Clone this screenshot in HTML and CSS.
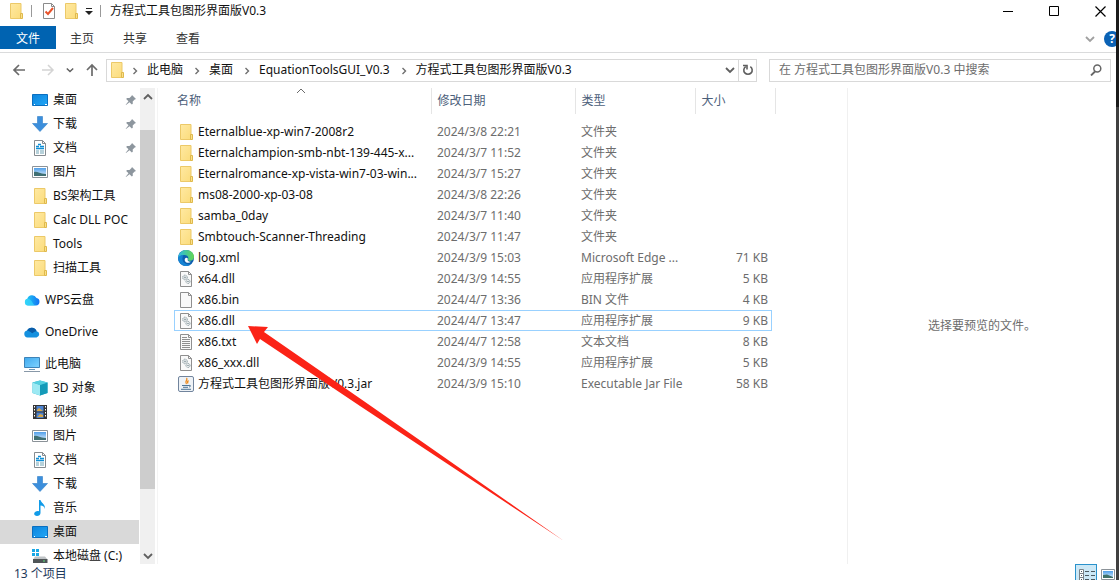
FILE: index.html
```html
<!DOCTYPE html>
<html lang="zh-CN">
<head>
<meta charset="utf-8">
<title>方程式工具包图形界面版V0.3</title>
<link rel="stylesheet" href="styles.css">
</head>
<body>
<svg class="sprite" aria-hidden="true">
  <defs>
    <linearGradient id="g-folder" x1="0" x2="1" y1="0" y2="1"><stop offset="0" stop-color="#ffe9a2"/><stop offset="1" stop-color="#fbdc7c"/></linearGradient>
    <linearGradient id="g-screen" x1="0" x2="1" y1="0" y2="1"><stop offset="0" stop-color="#0d84dc"/><stop offset="1" stop-color="#22a7f7"/></linearGradient>
    <linearGradient id="g-pc" x1="0" x2="1" y1="0" y2="1"><stop offset="0" stop-color="#3fa9ee"/><stop offset="1" stop-color="#7fd3ff"/></linearGradient>
    <linearGradient id="g-sky" x1="0" x2="0" y1="0" y2="1"><stop offset="0" stop-color="#4f9ee8"/><stop offset="1" stop-color="#dcefff"/></linearGradient>
    <linearGradient id="g-wps" x1="0" x2="1" y1="0" y2="0"><stop offset="0" stop-color="#23d3f5"/><stop offset="1" stop-color="#1271f2"/></linearGradient>
    <linearGradient id="g-edge" x1="0" x2="1" y1="0" y2="0"><stop offset="0" stop-color="#2bb8e6"/><stop offset="1" stop-color="#63d850"/></linearGradient>
  </defs>
  <symbol id="folder" viewBox="0 0 16 16"><path d="M2.500.5h10.500v15H2.500z" fill="url(#g-folder)" stroke="#ecc968"/><path d="M12.500 15.500v-5h2v5z" fill="#fbe08a" stroke="#dfb94c"/></symbol>
  <symbol id="desktop" viewBox="0 0 16 16"><path d="M.5 2.500h15v11H.5z" fill="url(#g-screen)" stroke="#0b6fc0"/><path d="M2 12.500h1m10 0h2" stroke="#fff"/></symbol>
  <symbol id="download" viewBox="0 0 16 16"><path d="M5.500.5h5v7h5L8 15.500.5 7.500h5z" fill="#3c8fdc" stroke="#2f7dc6" stroke-width=".6"/></symbol>
  <symbol id="doc" viewBox="0 0 16 16"><path d="M2.500.5h8l3 3v12h-11z" fill="#fff" stroke="#858b90"/><path d="M10.500.5v3h3" fill="none" stroke="#858b90"/><path d="M4 6.500h3M9 4.500H6M8 6.500h4M4 8.500h8" stroke="#0f8fd6" stroke-width="1.300"/><path d="M4 11h3m1 0h4M4 13h3m1 0h4" stroke="#6fa3b5"/></symbol>
  <symbol id="picture" viewBox="0 0 16 16"><path d="M.5 2.500h15v11H.5z" fill="#fff" stroke="#8b9298"/><path d="M2 4h12v8H2z" fill="url(#g-sky)"/><path d="M2 8c3-1 5 1 8 1.500l4 .5v2H2z" fill="#3f6f73"/></symbol>
  <symbol id="cloud-wps" viewBox="0 0 16 16"><path d="M4 13.500a3.500 3.500 0 0 1-.7-6.800A5 5 0 0 1 12.500 6a3.800 3.800 0 0 1-.5 7.500z" fill="url(#g-wps)"/><path d="M3.300 6.700c3 0 4 2 5 3.500s2 3.300 4 3.300H4a3.500 3.500 0 0 1-.7-6.800z" fill="#38d6fb" opacity=".7"/></symbol>
  <symbol id="cloud-one" viewBox="0 0 16 16"><path d="M3.500 13.500A3.500 3.500 0 0 1 3 6.600a5.200 5.200 0 0 1 9.600.6 3.200 3.200 0 0 1 0 6.300z" fill="#1490df"/><path d="M3 6.600a5.200 5.200 0 0 1 9.600.6c-2 0-3.200 1.400-4.500 2C6.500 8 5 6.800 3 6.600z" fill="#0a5ca8"/></symbol>
  <symbol id="pc" viewBox="0 0 16 16"><path d="M.5 1.500h15v10H.5z" fill="url(#g-pc)" stroke="#3d83b8"/><path d="M5 13.500h6" stroke="#6c99b8"/><path d="M0 15.500h16" stroke="#8898a8"/></symbol>
  <symbol id="cube" viewBox="0 0 16 16"><path d="M8 .5l7.500 2v10.500L8 15.500.5 13V2.500z" fill="#2bb5cf"/><path d="M.5 2.500 8 5v10.500L.5 13z" fill="#9ce9f3"/><path d="M8 5l7.500-2.500V13L8 15.500z" fill="#149ab8"/><path d="M.5 2.500 8 .5l7.500 2L8 5z" fill="#56cfdf"/></symbol>
  <symbol id="video" viewBox="0 0 16 16"><path d="M1 1h14v14H1z" fill="#353535"/><path d="M4.500 2h7v5.500h-7zM4.500 8.500h7V14h-7z" fill="#4c83d1"/><path d="M5 6l2-2 4 3H5zm0 7 3-3 3 1v2z" fill="#d5a64a"/><path d="M2.500 2v12m11-12v12" stroke="#fff" stroke-dasharray="1.500 1.500"/></symbol>
  <symbol id="music" viewBox="0 0 16 16"><path d="M7 0h1.500c.5 3 5 4 4.500 9-.5-2-2-3.500-4.500-3.500V13c0 1.700-1.700 3-3.500 3S2 15 2.200 13.500C2.500 11.700 5 10.500 7 11.300z" fill="#119be8"/></symbol>
  <symbol id="drive" viewBox="0 0 16 16"><path d="M0 1h3v3H0zm4 0h3v3H4zM0 5h3v3H0zm4 0h3v3H4z" fill="#19a8e6"/><path d="M3 8.500h10l2.500 3H1z" fill="#bfc3c6"/><path d="M1 11h14.500v4H1z" fill="#4f5557"/><path d="M11 13h2" stroke="#5de07c"/></symbol>
  <symbol id="pin" viewBox="0 0 12 12"><path d="M7 1l4 4-1.300.4-2 2 .1 2.300-1 .8L4.500 8.200 1 11l-.3-.2L3.500 7.300 1.200 5l.8-1 2.500.1 2-2z" fill="#8d969e"/></symbol>
  <symbol id="edge" viewBox="0 0 16 16"><circle cx="8" cy="8" r="8" fill="#0d5faf"/><path d="M0 8C.5 3 4 0 8 0c5 0 8 3.500 8 7 0 2.500-2 3.800-4 3.800-1.500 0-2.500-.6-2-1.400C11.500 6 8 4.500 5.500 5 2.500 5.500 1 7 0 8z" fill="url(#g-edge)"/><path d="M0 8c1-2 3-3 5.500-3C4 7 4 10.500 6 12.500S12 15 13.500 13.800A8 8 0 0 1 0 8z" fill="#1683d3"/><path d="M9.900 8.800c-1 2 1 3.200 3.100 3-2 2-6 1-6.300-1.500C6.500 8 8.500 6.600 9.900 8.800z" fill="#fff"/></symbol>
  <symbol id="sheet" viewBox="0 0 16 16"><path d="M2.500.5h8l3 3v12h-11z" fill="#f9f9f9" stroke="#8f8f8f"/><path d="M10.500.5v3h3" fill="none" stroke="#8f8f8f"/></symbol>
  <symbol id="dll" viewBox="0 0 16 16"><use href="#sheet"/><g fill="none" stroke="#87999f"><circle cx="7" cy="6.500" r="2.300" stroke-dasharray="1.200 .5"/><circle cx="7" cy="6.500" r=".7"/><circle cx="10" cy="10.500" r="2" stroke-dasharray="1.200 .5"/><circle cx="10" cy="10.500" r=".5"/></g></symbol>
  <symbol id="txt" viewBox="0 0 16 16"><use href="#sheet"/><path d="M4 3.500h5m-5 2h8m-8 2h8m-8 2h8m-8 2h8m-8 2h8" stroke="#8f8f8f"/></symbol>
  <symbol id="jar" viewBox="0 0 16 16"><rect x=".5" y=".5" width="15" height="15" rx="1.500" fill="#eef2f6" stroke="#71849d"/><path d="M8.500 2c2 2-2.500 3 0 6M10.500 4.500c-1 .8-1.500 1.500-.5 3" fill="none" stroke="#ee8a1c" stroke-width="1.300"/><path d="M4 9.500h7M5 11.300h5M3 13.300h10M11 9.500c2-.8 2 1.300 0 1.500" fill="none" stroke="#4e7595"/></symbol>
  <symbol id="chev-down" viewBox="0 0 10 10"><path d="M1 3l4 4 4-4" fill="none" stroke="currentColor" stroke-width="1.800"/></symbol>
  <symbol id="chev-right" viewBox="0 0 10 10"><path d="M3.500 2l3 3-3 3" fill="none" stroke="#6f6f6f" stroke-width="1.400"/></symbol>
</svg>

<div class="screen">
<main class="window">
  <header class="titlebar">
    <svg class="icon"><use href="#folder"/></svg>
    <span class="rule"></span>
    <button class="quick" aria-label="属性"><svg class="icon" viewBox="0 0 16 16"><path d="M2.500.5h8l3 3v12h-11z" fill="#fff" stroke="#8b8b8b"/><path d="M10.500.5v3h3" fill="none" stroke="#8b8b8b"/><path d="M4.500 8.500 7 11l5-6" fill="none" stroke="#e8532b" stroke-width="2"/></svg></button>
    <button class="quick" aria-label="新建文件夹"><svg class="icon"><use href="#folder"/></svg></button>
    <button class="quick more" aria-label="自定义快速访问工具栏"><svg width="8" height="8" viewBox="0 0 8 8"><path d="M1 1.500h6" stroke="#222"/><path d="M0 4h8L4 8z" fill="#222"/></svg></button>
    <span class="rule"></span>
    <h1 class="title">方程式工具包图形界面版V0.3</h1>
    <div class="controls">
      <button class="control" aria-label="最小化"><svg width="11" height="11" viewBox="0 0 11 11"><path d="M0 5.500h10" stroke="#000"/></svg></button>
      <button class="control" aria-label="最大化"><svg width="11" height="11" viewBox="0 0 11 11"><path d="M.5.5h9v9h-9z" fill="none" stroke="#000"/></svg></button>
      <button class="control" aria-label="关闭"><svg width="11" height="11" viewBox="0 0 11 11"><path d="M.5.5l10 10m0-10l-10 10" stroke="#000" stroke-width="1.200"/></svg></button>
    </div>
  </header>

  <nav class="ribbon" aria-label="功能区">
    <button class="tab file">文件</button>
    <button class="tab">主页</button>
    <button class="tab">共享</button>
    <button class="tab">查看</button>
    <div class="ribbon-end">
      <button class="quick expand" aria-label="展开功能区"><svg width="10" height="10"><use href="#chev-down"/></svg></button>
      <button class="help" aria-label="帮助">?</button>
    </div>
  </nav>

  <div class="location">
    <div class="history">
      <button class="quick" aria-label="后退"><svg width="14" height="14" viewBox="0 0 14 14"><path d="M13 7H2m5-5L2 7l5 5" fill="none" stroke="#6b6b6b" stroke-width="1.700"/></svg></button>
      <button class="quick" aria-label="前进"><svg width="14" height="14" viewBox="0 0 14 14"><path d="M1 7h11M7 2l5 5-5 5" fill="none" stroke="#d4d4d4" stroke-width="1.500"/></svg></button>
      <button class="quick recent" aria-label="最近位置"><svg width="8" height="8"><use href="#chev-down"/></svg></button>
      <button class="quick" aria-label="上移"><svg width="14" height="14" viewBox="0 0 14 14"><path d="M7 13V2M2 7l5-5 5 5" fill="none" stroke="#6b6b6b" stroke-width="1.700"/></svg></button>
    </div>
    <div class="address">
      <svg class="icon"><use href="#folder"/></svg>
      <svg class="sep"><use href="#chev-right"/></svg><a class="crumb" href="#">此电脑</a>
      <svg class="sep"><use href="#chev-right"/></svg><a class="crumb" href="#">桌面</a>
      <svg class="sep"><use href="#chev-right"/></svg><a class="crumb" href="#">EquationToolsGUI_V0.3</a>
      <svg class="sep"><use href="#chev-right"/></svg><a class="crumb" href="#">方程式工具包图形界面版V0.3</a>
      <button class="quick drop" aria-label="以前的位置"><svg width="10" height="10"><use href="#chev-down"/></svg></button>
      <button class="quick refresh" aria-label="刷新"><svg width="12" height="12" viewBox="0 0 12 12"><path d="M8.300 2.600a4.200 4.200 0 1 1-4.600 0M1 1.500h4v4" fill="none" stroke="#5f5f5f" stroke-width="1.600"/></svg></button>
    </div>
    <label class="search">
      <input type="search" placeholder="在 方程式工具包图形界面版V0.3 中搜索" aria-label="搜索">
      <svg width="12" height="12" viewBox="0 0 12 12"><circle cx="7.300" cy="4.500" r="3.500" fill="none" stroke="#666" stroke-width="1.500"/><path d="M5 7.500 1 11.500" stroke="#666" stroke-width="1.800"/></svg>
    </label>
  </div>

  <div class="content">
    <aside class="sidebar">
      <ul class="tree">
        <li><a class="node" href="#"><svg class="icon"><use href="#desktop"/></svg>桌面<svg class="pin"><use href="#pin"/></svg></a></li>
        <li><a class="node" href="#"><svg class="icon"><use href="#download"/></svg>下载<svg class="pin"><use href="#pin"/></svg></a></li>
        <li><a class="node" href="#"><svg class="icon"><use href="#doc"/></svg>文档<svg class="pin"><use href="#pin"/></svg></a></li>
        <li><a class="node" href="#"><svg class="icon"><use href="#picture"/></svg>图片<svg class="pin"><use href="#pin"/></svg></a></li>
        <li><a class="node" href="#"><svg class="icon"><use href="#folder"/></svg>BS架构工具</a></li>
        <li><a class="node" href="#"><svg class="icon"><use href="#folder"/></svg>Calc DLL POC</a></li>
        <li><a class="node" href="#"><svg class="icon"><use href="#folder"/></svg>Tools</a></li>
        <li><a class="node" href="#"><svg class="icon"><use href="#folder"/></svg>扫描工具</a></li>
        <li class="group"><a class="node root" href="#"><svg class="icon"><use href="#cloud-wps"/></svg>WPS云盘</a></li>
        <li class="group"><a class="node root" href="#"><svg class="icon"><use href="#cloud-one"/></svg>OneDrive</a></li>
        <li class="group"><a class="node root" href="#"><svg class="icon"><use href="#pc"/></svg>此电脑</a></li>
        <li><a class="node" href="#"><svg class="icon"><use href="#cube"/></svg>3D 对象</a></li>
        <li><a class="node" href="#"><svg class="icon"><use href="#video"/></svg>视频</a></li>
        <li><a class="node" href="#"><svg class="icon"><use href="#picture"/></svg>图片</a></li>
        <li><a class="node" href="#"><svg class="icon"><use href="#doc"/></svg>文档</a></li>
        <li><a class="node" href="#"><svg class="icon"><use href="#download"/></svg>下载</a></li>
        <li><a class="node" href="#"><svg class="icon"><use href="#music"/></svg>音乐</a></li>
        <li><a class="node selected" href="#"><svg class="icon"><use href="#desktop"/></svg>桌面</a></li>
        <li><a class="node" href="#"><svg class="icon"><use href="#drive"/></svg>本地磁盘 (C:)</a></li>
      </ul>
      <div class="scrollbar">
        <button class="quick step" aria-label="向上滚动"><svg class="flip" width="10" height="10"><use href="#chev-down"/></svg></button>
        <div class="track"><div class="thumb"></div></div>
        <button class="quick step" aria-label="向下滚动"><svg width="10" height="10"><use href="#chev-down"/></svg></button>
      </div>
    </aside>

    <section class="files">
      <table class="list">
        <colgroup><col class="c-name"><col class="c-date"><col class="c-type"><col class="c-size"></colgroup>
        <thead>
          <tr><th class="sorted">名称<svg class="sort" viewBox="0 0 10 6"><path d="M1 5l4-4 4 4" fill="none" stroke="#6b6b6b"/></svg></th><th>修改日期</th><th>类型</th><th>大小</th></tr>
        </thead>
        <tbody>
          <tr><td><span class="name"><svg class="icon"><use href="#folder"/></svg><span class="label">Eternalblue-xp-win7-2008r2</span></span></td><td>2024/3/8 22:21</td><td>文件夹</td><td></td></tr>
          <tr><td><span class="name"><svg class="icon"><use href="#folder"/></svg><span class="label">Eternalchampion-smb-nbt-139-445-x...</span></span></td><td>2024/3/7 11:52</td><td>文件夹</td><td></td></tr>
          <tr><td><span class="name"><svg class="icon"><use href="#folder"/></svg><span class="label">Eternalromance-xp-vista-win7-03-win...</span></span></td><td>2024/3/7 15:27</td><td>文件夹</td><td></td></tr>
          <tr><td><span class="name"><svg class="icon"><use href="#folder"/></svg><span class="label">ms08-2000-xp-03-08</span></span></td><td>2024/3/8 22:26</td><td>文件夹</td><td></td></tr>
          <tr><td><span class="name"><svg class="icon"><use href="#folder"/></svg><span class="label">samba_0day</span></span></td><td>2024/3/7 11:40</td><td>文件夹</td><td></td></tr>
          <tr><td><span class="name"><svg class="icon"><use href="#folder"/></svg><span class="label">Smbtouch-Scanner-Threading</span></span></td><td>2024/3/7 11:47</td><td>文件夹</td><td></td></tr>
          <tr><td><span class="name"><svg class="icon"><use href="#edge"/></svg><span class="label">log.xml</span></span></td><td>2024/3/9 15:03</td><td>Microsoft Edge ...</td><td>71 KB</td></tr>
          <tr><td><span class="name"><svg class="icon"><use href="#dll"/></svg><span class="label">x64.dll</span></span></td><td>2024/3/9 14:55</td><td>应用程序扩展</td><td>5 KB</td></tr>
          <tr><td><span class="name"><svg class="icon"><use href="#sheet"/></svg><span class="label">x86.bin</span></span></td><td>2024/4/7 13:36</td><td>BIN 文件</td><td>4 KB</td></tr>
          <tr class="focused"><td><span class="name"><svg class="icon"><use href="#dll"/></svg><span class="label">x86.dll</span></span></td><td>2024/4/7 13:47</td><td>应用程序扩展</td><td>9 KB</td></tr>
          <tr><td><span class="name"><svg class="icon"><use href="#txt"/></svg><span class="label">x86.txt</span></span></td><td>2024/4/7 12:58</td><td>文本文档</td><td>8 KB</td></tr>
          <tr><td><span class="name"><svg class="icon"><use href="#dll"/></svg><span class="label">x86_xxx.dll</span></span></td><td>2024/3/9 14:55</td><td>应用程序扩展</td><td>5 KB</td></tr>
          <tr><td><span class="name"><svg class="icon"><use href="#jar"/></svg><span class="label">方程式工具包图形界面版V0.3.jar</span></span></td><td>2024/3/9 15:10</td><td>Executable Jar File</td><td>58 KB</td></tr>
        </tbody>
      </table>
      <svg class="pointer" viewBox="0 0 320 216" aria-hidden="true"><path d="M0 0 20 1 16 6 120 78 316 215 112 80 12 13 9 18z" fill="#fb2317"/></svg>
    </section>

    <section class="preview"><p>选择要预览的文件。</p></section>
  </div>

  <footer class="status">
    <span>13 个项目</span>
    <div class="views">
      <button class="view active" aria-label="详细信息"><svg width="20" height="20" viewBox="0 0 20 20"><path d="M3.500 4.500h4v12h-4zM3.500 8.500h4m-4 4h4" fill="#fff" stroke="#7a8288"/><path d="M5 6.500h1m-1 4h1m-1 4h1M9 6.500h4m2 0h4m-10 4h4m2 0h4m-10 4h4m2 0h4" stroke="#4d5a61"/></svg></button>
      <button class="view" aria-label="大缩略图"><svg width="14" height="14" viewBox="0 0 14 14"><path d="M.5.5h13v10H.5z" fill="#fff" stroke="#8b9298"/><path d="M2 2h10v7H2z" fill="url(#g-sky)"/><path d="M2 6l4-.5L12 8v1H2z" fill="#3f7068"/></svg></button>
    </div>
  </footer>
</main>
<div class="edge"></div>
</div>
</body>
</html>
```
FILE: styles.css
```css
* { box-sizing: border-box; }

body {
  margin: 0;
  background: #fff;
  color: #111;
  font: 12px/20px "Noto Sans", "Noto Sans CJK SC", sans-serif;
}

button, input { font: inherit; color: inherit; }
a { color: inherit; text-decoration: none; }
svg { display: block; flex: none; }

.sprite { position: absolute; width: 0; height: 0; }
.icon { width: 16px; height: 16px; }

.screen { display: flex; height: 100vh; overflow: hidden; }
.window {
  flex: 1;
  min-width: 0;
  display: flex;
  flex-direction: column;
  overflow: hidden;
}
.edge {
  width: 3px;
  background: linear-gradient(#1b1b1b 107px, #404040 107px);
}

.quick {
  display: flex;
  align-items: center;
  justify-content: center;
  padding: 0;
  border: 0;
  background: none;
  color: #5f5f5f;
}

/* Title bar */
.titlebar {
  display: flex;
  align-items: center;
  gap: 6px;
  height: 22px;
  margin-bottom: 4px;
  padding-left: 8px;
}
.rule { width: 1px; height: 12px; margin: 0 3px 0 1px; background: #999; }
.more { width: 8px; }
.title { flex: 1; margin: 0; font-size: 12px; font-weight: 400; }
.controls { display: flex; margin-right: -7px; }
.control {
  display: flex;
  align-items: center;
  justify-content: center;
  width: 46px;
  height: 22px;
  padding: 0;
  border: 0;
  background: none;
}

/* Ribbon tabs */
.ribbon {
  display: flex;
  gap: 1px;
  height: 27px;
  padding-bottom: 3px;
  border-bottom: 1px solid #dadbdc;
  flex: none;
}
.tab { padding: 2px 14px 0; border: 0; background: none; color: #333; }
.file { margin-right: -1px; padding: 2px 16px 0; background: #0063b1; color: #fff; }
.ribbon-end { display: flex; align-items: center; margin: 3px -4px 0 auto; }
.expand { width: 28px; color: #a0a0a0; }
.help {
  width: 16px;
  height: 16px;
  padding: 0;
  border: 0;
  border-radius: 50%;
  background: #0b62b5;
  color: #fff;
  font-weight: 700;
  line-height: 16px;
}

/* Address row */
.location {
  display: flex;
  align-items: center;
  height: 34px;
  margin-bottom: 1px;
  padding: 0 5px 0 12px;
  flex: none;
}
.history { display: flex; align-items: center; gap: 15px; width: 94px; }
.recent { margin: 0 -4px; }
.address {
  display: flex;
  align-items: stretch;
  flex: 647;
  height: 23px;
  border: 1px solid #d9d9d9;
  padding-left: 2px;
  min-width: 0;
}
.address .icon { margin-top: 2px; }
.sep { width: 10px; height: 10px; margin: 6px 7px 0 9px; }
.address .icon + .sep { margin-left: 5px; }
.crumb { white-space: nowrap; }
.drop { width: 17px; margin-left: auto; }
.refresh { width: 18px; border-left: 1px solid #d9d9d9; }
.search {
  display: flex;
  align-items: center;
  flex: 323;
  height: 23px;
  margin-left: 12px;
  padding: 0 8px 0 9px;
  border: 1px solid #d9d9d9;
}
.search input {
  flex: 1;
  min-width: 0;
  padding: 0;
  border: 0;
  outline: 0;
  background: none;
}
.search input::placeholder { color: #6d6d6d; }

/* Body */
.content { display: flex; flex: 1; min-height: 0; }

.sidebar { display: flex; width: 158px; border-right: 1px solid #f4f4f4; }
.tree {
  flex: 1;
  margin: 0;
  padding: 0 1px 0 0;
  list-style: none;
  overflow: hidden;
}
.group { padding-top: 8px; }
.node {
  display: flex;
  align-items: center;
  gap: 5px;
  height: 24px;
  padding-left: 32px;
  white-space: nowrap;
}
.root { padding-left: 24px; }
.selected { background: #d9d9d9; }
.pin { width: 12px; height: 12px; margin: 0 2px 0 auto; }

.scrollbar {
  display: flex;
  flex-direction: column;
  width: 15px;
  margin-right: 2px;
  background: #f0f0f0;
}
.step { height: 17px; }
.flip { transform: rotate(180deg); }
.track { flex: 1; padding-top: 25px; }
.thumb { height: 86%; background: #cdcdcd; }

.files { position: relative; flex: 673; padding-left: 16px; min-width: 0; }
.list { border-collapse: collapse; table-layout: fixed; width: 601px; }
.c-name { width: 257px; }
.c-date { width: 144px; }
.c-type { width: 120px; }
.c-size { width: 80px; }
.list th {
  position: relative;
  height: 26px;
  padding: 0 6px;
  border-right: 1px solid #e5e5e5;
  color: #4c607a;
  font-weight: 400;
  text-align: left;
}
.list th.sorted { padding-left: 3px; }
.sort { position: absolute; top: 0; left: 50%; width: 10px; height: 6px; margin-left: -6px; }
.list tbody::before { content: ""; display: block; height: 7px; }
.list td {
  height: 21px;
  padding: 0 6px;
  color: #6d6d6d;
  white-space: nowrap;
}
.list td:first-child { padding-left: 4px; color: #111; }
.list td:last-child { padding-right: 7px; text-align: right; }
.name { display: flex; align-items: center; gap: 4px; }
.label { white-space: nowrap; }
.focused { position: relative; }
.focused td:first-child::before {
  content: "";
  position: absolute;
  inset: 0 3px 0 0;
  border: 1px solid #99d1ff;
}
.pointer { position: absolute; left: 90px; top: 238px; width: 320px; height: 216px; }

.preview {
  flex: 268;
  padding-top: 228px;
  border-left: 1px solid #f0f0f0;
  color: #6d6d6d;
  text-align: center;
}
.preview p { margin: 0; }

/* Status bar */
.status {
  display: flex;
  justify-content: space-between;
  height: 16px;
  padding-left: 14px;
  color: #1e395b;
  flex: none;
}
.status span { padding-top: 3px; line-height: 14px; }
.views { display: flex; gap: 4px; }
.view {
  display: flex;
  height: 22px;
  padding: 5px 1px 0 0;
  border: 0;
  background: none;
}
.active { width: 22px; padding: 0; border: 1px solid #2a92cc; background: #cce8f6; }
```
